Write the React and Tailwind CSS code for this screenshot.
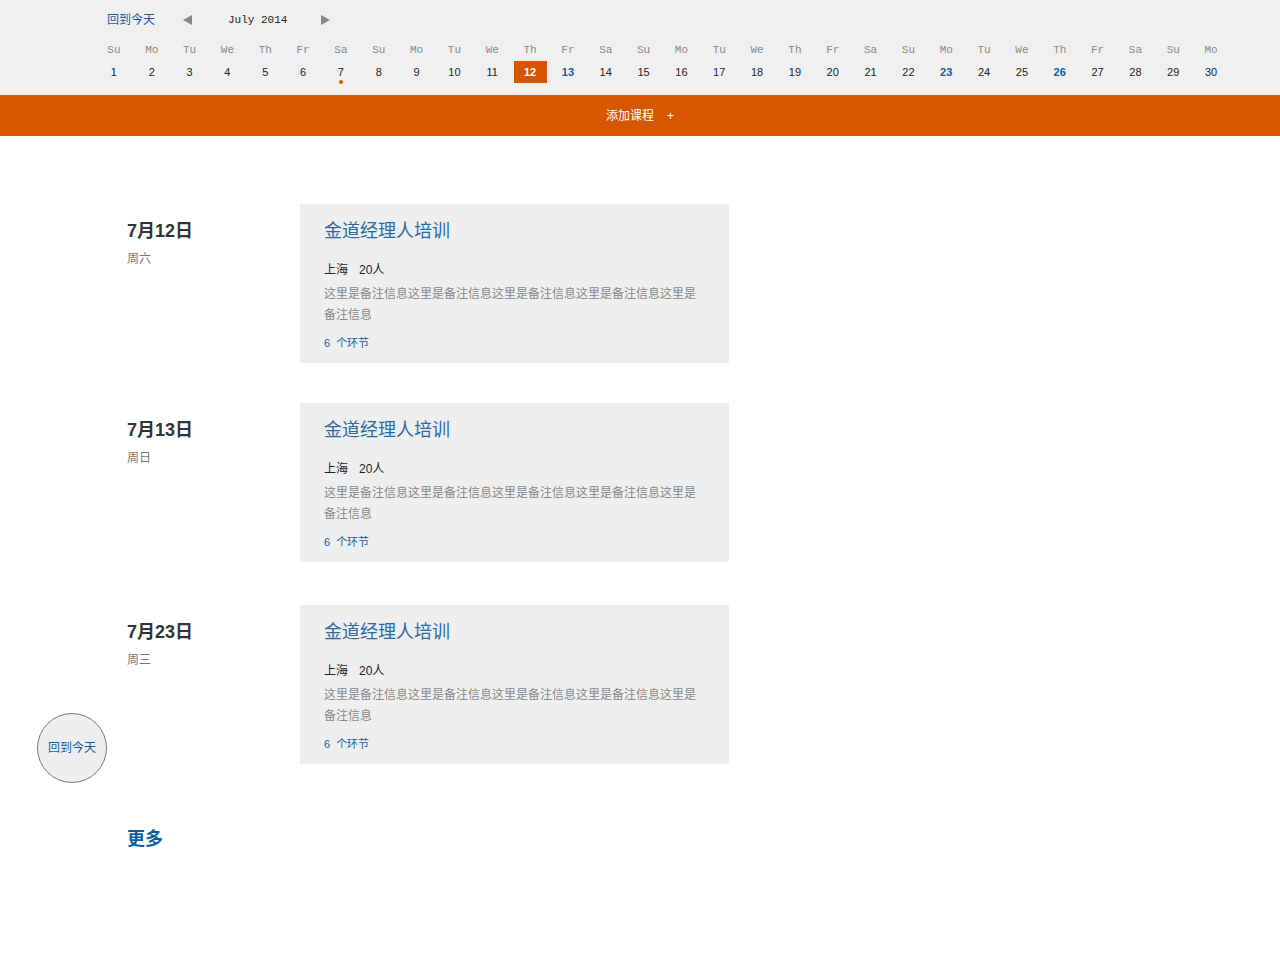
import React from 'react';

const weekdays = ['Su', 'Mo', 'Tu', 'We', 'Th', 'Fr', 'Sa'];

// July 2014 starts on a Tuesday, but the strip labels begin on Su
const days = Array.from({ length: 30 }, (_, i) => ({
  num: i + 1,
  label: weekdays[i % 7],
}));

const highlighted = [13, 23, 26];
const today = 12;
const marked = [7];

const courses = [
  { date: '7月12日', week: '周六', gap: 'mb-[40px]' },
  { date: '7月13日', week: '周日', gap: 'mb-[43px]' },
  { date: '7月23日', week: '周三', gap: 'mb-[62px]' },
];

const cjk = { fontFamily: '"Liberation Sans", "Noto Sans CJK SC", sans-serif' };

function DayCell({ day }) {
  const isToday = day.num === today;
  const isHi = highlighted.includes(day.num);
  return (
    <div className="flex flex-col items-center">
      <div className="mt-[3px] h-[14px] text-[11px] leading-[14px] text-[#888]" style={{ fontFamily: '"Liberation Mono", monospace' }}>
        {day.label}
      </div>
      <div className="relative mt-[4px] flex h-[22px] w-[33px] items-center justify-center">
        <span
          className={
            isToday
              ? 'flex h-[22px] w-[33px] items-center justify-center bg-[#d75500] text-[11px] font-bold text-white'
              : isHi
              ? 'text-[11px] font-bold text-[#0b5fa0]'
              : 'text-[11px] text-[#222]'
          }
        >
          {day.num}
        </span>
        {marked.includes(day.num) && (
          <span className="absolute left-1/2 top-[19px] h-[4px] w-[4px] -translate-x-1/2 rounded-full bg-[#d75500]" />
        )}
      </div>
    </div>
  );
}

function CourseCard() {
  return (
    <div className="w-[429px] bg-[#efefef] px-6 pb-[12px] pt-[14px]">
      <h3 className="text-[18px] leading-[26px] text-[#2a6aa5]">金道经理人培训</h3>
      <div className="mt-[18px] flex text-[12px] leading-[16px] text-[#222]">
        <span>上海</span>
        <span className="ml-[11px]">20人</span>
      </div>
      <p className="mt-[6px] text-[12px] leading-[21px] text-[#888]">
        这里是备注信息这里是备注信息这里是备注信息这里是备注信息这里是备注信息
      </p>
      <div className="mt-[9px] text-[11px] leading-[16px] text-[#0b5fa0]">
        6<span className="ml-[6px]">个环节</span>
      </div>
    </div>
  );
}

export default function App() {
  return (
    <div className="relative min-h-[963px] bg-white" style={cjk}>
      {/* Calendar strip */}
      <div className="h-[95px] bg-[#f0f0f0] pl-[95px]">
        <div className="flex h-[40px] items-center">
          <a className="ml-[12px] text-[12px] text-[#0b5fa0]">回到今天</a>
          <span className="ml-[28px] h-0 w-0 border-y-[5px] border-r-[9px] border-y-transparent border-r-[#888]" />
          <span className="ml-[36px] text-[11px] text-[#222]" style={{ fontFamily: '"Liberation Mono", monospace' }}>
            July 2014
          </span>
          <span className="ml-[34px] h-0 w-0 border-y-[5px] border-l-[9px] border-y-transparent border-l-[#888]" />
        </div>
        <div className="grid w-[1135px] grid-cols-[repeat(30,minmax(0,1fr))]">
          {days.map((d) => (
            <DayCell key={d.num} day={d} />
          ))}
        </div>
      </div>

      {/* Add course bar */}
      <div className="flex h-[41px] items-center justify-center bg-[#d75600] text-[12px] text-white">
        <span>添加课程</span>
        <span className="ml-[13px]">+</span>
      </div>

      {/* Course list */}
      <div className="pl-[127px] pt-[68px]">
        {courses.map((c) => (
          <div key={c.date} className={`flex ${c.gap}`}>
            <div className="w-[173px] pt-[15px]">
              <div className="text-[18px] font-semibold leading-[24px] text-[#333]">{c.date}</div>
              <div className="mt-[7px] text-[12px] text-[#777]">{c.week}</div>
            </div>
            <CourseCard />
          </div>
        ))}
        <a className="text-[18px] font-bold text-[#0b5fa0]">更多</a>
      </div>

      {/* Floating back-to-today */}
      <button className="absolute left-[37px] top-[713px] flex h-[70px] w-[70px] items-center justify-center rounded-full border border-[#777] bg-[#efefef] text-[12px] text-[#0b5fa0]">
        回到今天
      </button>
    </div>
  );
}
